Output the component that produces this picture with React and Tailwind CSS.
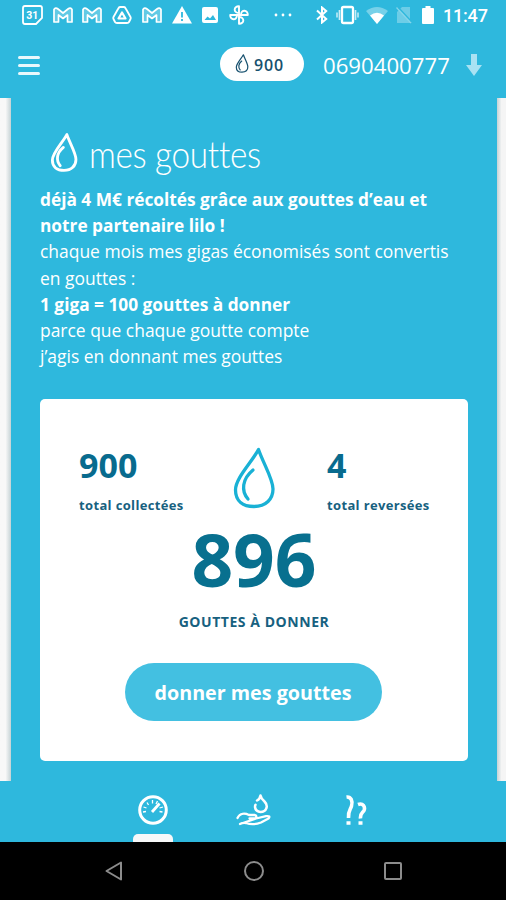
import React from 'react';

const Drop = ({ className, strokeWidth = 3 }) => (
    <svg viewBox="0 0 42 62" className={className} fill="none" stroke="currentColor" strokeWidth={strokeWidth} strokeLinecap="round" strokeLinejoin="round">
        <path d="M25.500 2.500C19 15 2.500 31 2.500 43C2.500 54 10 59.500 21 59.500C33 59.500 40 52 40 42C40 32 31 18 25.500 2.500Z" />
        <path d="M20 23C9 32 8 44 15 52" />
    </svg>
);

const Mail = () => (
    <svg viewBox="0 0 20 16" className="h-4 w-5" fill="currentColor" fillOpacity="0.25" stroke="currentColor" strokeWidth="1.7" strokeLinejoin="round">
        <path d="M1 15V2.500Q2.500 0 5 2L10 6L15 2Q17.500 0 19 2.500V15H14.500V8L10 11.500L5.500 8V15Z" />
    </svg>
);

const StatusBar = () => (
    <div className="flex h-[30px] items-center text-white">
        <div className="ml-[22px] flex w-[227px] items-center justify-between">
            <svg viewBox="0 0 21 20" className="h-5 w-[21px]" fill="none" stroke="currentColor" strokeWidth="1.8">
                <path d="M3 1H18Q20 1 20 3V13L14 19H3Q1 19 1 17V3Q1 1 3 1Z" />
                <text x="10.200" y="13.800" textAnchor="middle" fontSize="10.500" fontWeight="700" fontFamily="Roboto, sans-serif" fill="currentColor" stroke="none">31</text>
            </svg>
            <Mail />
            <Mail />
            <svg viewBox="0 0 20 18" className="h-[18px] w-5" fill="none" stroke="currentColor" strokeWidth="1.8" strokeLinejoin="round">
                <path d="M8 1H12Q13 1 14 3L18.500 11Q19 12 18.500 13L17 16Q16.500 17 15 17H5Q3.500 17 3 16L1.500 13Q1 12 1.500 11L6 3Q7 1 8 1Z" />
                <path d="M10 6.500L13.500 12.500H6.500Z" strokeWidth="2.2" />
            </svg>
            <Mail />
            <svg viewBox="0 0 20 18" className="h-[18px] w-5">
                <path d="M10 0L20 17.500H0Z" fill="currentColor" />
                <path d="M10 6V11.500M10 13V15" stroke="#2eb8dd" strokeWidth="1.800" />
            </svg>
            <svg viewBox="0 0 18 18" className="h-[18px] w-[18px]">
                <rect x="1" y="1" width="16" height="16" rx="2" fill="currentColor" />
                <path d="M3.500 14L6.500 10.500L9 12.500L12 9L15 14Z" fill="#2eb8dd" />
            </svg>
            <svg viewBox="0 0 20 20" className="h-5 w-5" fill="none" stroke="currentColor" strokeWidth="1.900" strokeLinejoin="round">
                <path d="M10 10V1.200C4.500 1 4 8 10 8M10 10H18.800C19 4.500 12 4 12 10M10 10V18.800C15.500 19 16 12 10 12M10 10H1.200C1 15.500 8 16 8 10" />
            </svg>
        </div>
        <svg viewBox="0 0 18 4" className="ml-[25px] h-1 w-[18px]" fill="currentColor">
            <circle cx="2" cy="2" r="1.400" />
            <circle cx="9" cy="2" r="1.400" />
            <circle cx="16" cy="2" r="1.400" />
        </svg>
        <svg viewBox="0 0 12 18" className="ml-[24px] h-[18px] w-3" fill="none" stroke="currentColor" strokeWidth="2">
            <path d="M1 4.500L10.200 13L6 16.500V1.500L10.200 5L1 13.500" />
        </svg>
        <svg viewBox="0 0 23 20" className="ml-[8px] h-5 w-[23px]" fill="none" stroke="currentColor">
            <rect x="6" y="2" width="11" height="16" rx="1.500" strokeWidth="2.300" />
            <path d="M3.500 5V15M19.500 5V15" strokeWidth="1.700" opacity=".75" />
            <path d="M1 7.500V12.500M22 7.500V12.500" strokeWidth="1.500" opacity=".75" />
        </svg>
        <svg viewBox="0 0 22 17" className="ml-[7px] h-[17px] w-[22px]" fill="currentColor">
            <path d="M0 4Q11 -4 22 4L11 17Z" opacity=".35" />
            <path d="M4 8.500Q11 3 18 8.500L11 17Z" />
        </svg>
        <svg viewBox="0 0 16 18" className="ml-2 h-[18px] w-4">
            <path d="M6 1H14V17H1V6Z" fill="currentColor" opacity=".3" />
            <path d="M0.500 1.500L15 17" stroke="#86d5ea" strokeWidth="1.500" />
            <path d="M2 1L15.500 15.500" stroke="#2eb8dd" strokeWidth="1.200" />
        </svg>
        <svg viewBox="0 0 12 18" className="ml-[10px] h-[18px] w-3" fill="currentColor">
            <path d="M3.500 0H8.500V2H11Q12 2 12 3V17Q12 18 11 18H1Q0 18 0 17V3Q0 2 1 2H3.500Z" />
        </svg>
        <span className="ml-[9px] mt-[2px] font-[Roboto,sans-serif] text-[18px] font-medium leading-none tracking-[-0.2px]">11:47</span>
    </div>
);

const Header = () => (
    <header className="flex h-[68px] items-center pb-px text-white">
        <button type="button" aria-label="Menu" className="ml-[18px] mt-1 flex w-[22px] flex-col gap-[5px]">
            <span className="h-[3px] rounded bg-white/90" />
            <span className="h-[3px] rounded bg-white/90" />
            <span className="h-[3px] rounded bg-white/90" />
        </button>
        <div className="ml-[180px] flex h-[34px] w-[84px] items-center rounded-full bg-white pl-[15px] text-[#17516f]">
            <Drop className="h-[19px] w-[14px]" strokeWidth={4} />
            <span className="ml-[5px] mt-[2px] text-[16px] font-semibold tracking-[0.9px]">900</span>
        </div>
        <span className="ml-[19px] mt-[5px] w-[127px] whitespace-nowrap text-[22.2px] leading-none">0690400777</span>
        <svg viewBox="0 0 16 22" className="ml-[16px] mt-[3px] h-[22px] w-4" fill="#a9e2f3">
            <path d="M5 0H11V11H16L8 22L0 11H5Z" />
        </svg>
    </header>
);

const Stat = ({ value, label }) => (
    <div className="w-[110px] text-[#086b8e]">
        <p className="-mt-0.5 text-[34px] font-bold leading-10">{value}</p>
        <p className="mt-[10px] whitespace-nowrap text-[13px] font-bold leading-5 tracking-[0.35px] text-[#17617f]">{label}</p>
    </div>
);

const TabBar = () => (
    <nav className="flex h-[61px] shrink-0 text-white">
        <div className="ml-[133px] flex w-10 flex-col items-center justify-between pt-[14px]">
            <svg viewBox="0 0 30 30" className="h-[30px] w-[30px]" fill="none" stroke="currentColor">
                <circle cx="15" cy="15" r="13.300" strokeWidth="3" />
                <path d="M5 17L8 16.500M5.500 12L8.500 13M9 7.500L10.500 10M14.500 5V8.500M19.500 6L18 9M25 12L21.500 13M24.500 17L21.500 16.500" strokeWidth="1.300" />
                <path d="M14 17L21.500 8.500" strokeWidth="2.800" />
            </svg>
            <span className="h-2 w-10 rounded-t-[5px] bg-[#f7f8f9]" />
        </div>
        <svg viewBox="0 0 36 36" className="ml-[63px] mt-[11px] h-9 w-9" fill="none" stroke="currentColor" strokeLinecap="round" strokeLinejoin="round">
            <path d="M21 8.500Q24 7 24.500 3.500Q25 6.500 28.500 9.500Q31.500 12.500 30.500 16Q29 20 24.500 20Q19.500 19.500 19 15Q19 13.500 19.500 12.800" strokeWidth="2.500" />
            <path d="M1.500 26C4 21 9 21 13 23H18.500C21 23.500 21 26.500 18.500 26.500H13.500M20 26.500L30 24.200Q35 23.500 32.500 26.500L25 30.500Q17 33.500 10 31Q6.500 30.500 4 32Z" strokeWidth="2.300" />
        </svg>
        <svg viewBox="0 0 22 32" className="ml-[73px] mt-[13px] h-8 w-[22px]" fill="none" stroke="currentColor" strokeWidth="3.600">
            <path d="M1.500 3C6 2.500 8 7 6.500 12C6 15 3 16 3.500 24" />
            <path d="M13 10.500C18 8.500 20.500 13 19 16.500C18 18.500 15 19 15.500 24.500" />
            <path d="M1.500 29H5.500M13.500 29H17.500" strokeWidth="3.700" />
        </svg>
    </nav>
);

const SystemNav = () => (
    <div className="flex h-[58px] shrink-0 items-center bg-black text-[#8c8c8c]">
        <svg viewBox="0 0 18 20" className="ml-[105px] h-5 w-[18px]" fill="none" stroke="currentColor" strokeWidth="2" strokeLinejoin="round">
            <path d="M16 1.500V18.500L1.500 10Z" />
        </svg>
        <span className="ml-[121px] h-5 w-5 rounded-full border-2 border-[#8c8c8c]" />
        <span className="ml-[120px] h-[18px] w-[18px] rounded-[2px] border-2 border-[#8c8c8c]" />
    </div>
);

const App = () => (
    <div className="flex h-[900px] w-[506px] flex-col overflow-hidden bg-[#2eb8dd] font-['Open_Sans',sans-serif]">
        <StatusBar />
        <Header />

        <main className="flex h-[683px] shrink-0">
            <div className="w-[11px] shrink-0 bg-linear-to-r from-[#f8f8f8] from-50% to-[#c5d2d5]" />
            <div className="w-[486px] px-[29px] pt-[32px] text-white">
                <div className="flex h-[56px]">
                    <Drop className="ml-[10px] mt-[3px] h-[39px] w-[28px]" strokeWidth={4.5} />
                    <h1 className="ml-[11px] origin-left scale-x-[0.9] whitespace-nowrap font-[Lato,sans-serif] text-[37px] font-light leading-[47px] tracking-[-0.35px]">mes gouttes</h1>
                </div>

                <div className="whitespace-nowrap text-[17.45px] leading-[26.2px]">
                    <p className="pt-px text-[17.3px] font-bold">déjà 4 M€ récoltés grâce aux gouttes d’eau et<br />notre partenaire lilo !</p>
                    <p className="-mt-px">chaque mois mes gigas économisés sont convertis<br />en gouttes :</p>
                    <p className="pt-px text-[17.3px] font-bold">1 giga = 100 gouttes à donner</p>
                    <p className="-mt-px">parce que chaque goutte compte</p>
                    <p>j’agis en donnant mes gouttes</p>
                </div>

                <section className="mt-[30px] flex h-[362px] w-[428px] flex-col items-center rounded-[5px] bg-white pt-[48px]">
                    <div className="flex h-[70px] w-full pl-[39px]">
                        <Stat value="900" label="total collectées" />
                        <Drop className="ml-[44px] h-[62px] w-[42px] text-[#19b1d5]" strokeWidth={3.3} />
                        <div className="ml-[52px]">
                            <Stat value="4" label="total reversées" />
                        </div>
                    </div>
                    <p className="text-[73px] font-bold leading-[84px] text-[#08708f]">896</p>
                    <p className="mt-[11px] text-[14px] font-bold leading-5 tracking-[0.55px] text-[#17617f]">GOUTTES À DONNER</p>
                    <button type="button" className="-ml-0.5 mt-[31px] h-[58px] w-[257px] rounded-full bg-[#43c0e1] text-[19.7px] font-bold text-white">
                        donner mes gouttes
                    </button>
                </section>
            </div>
            <div className="w-[9px] shrink-0 bg-linear-to-l from-[#f5f5f5] from-50% to-[#c5d2d5]" />
        </main>

        <TabBar />
        <SystemNav />
    </div>
);

export default App;
